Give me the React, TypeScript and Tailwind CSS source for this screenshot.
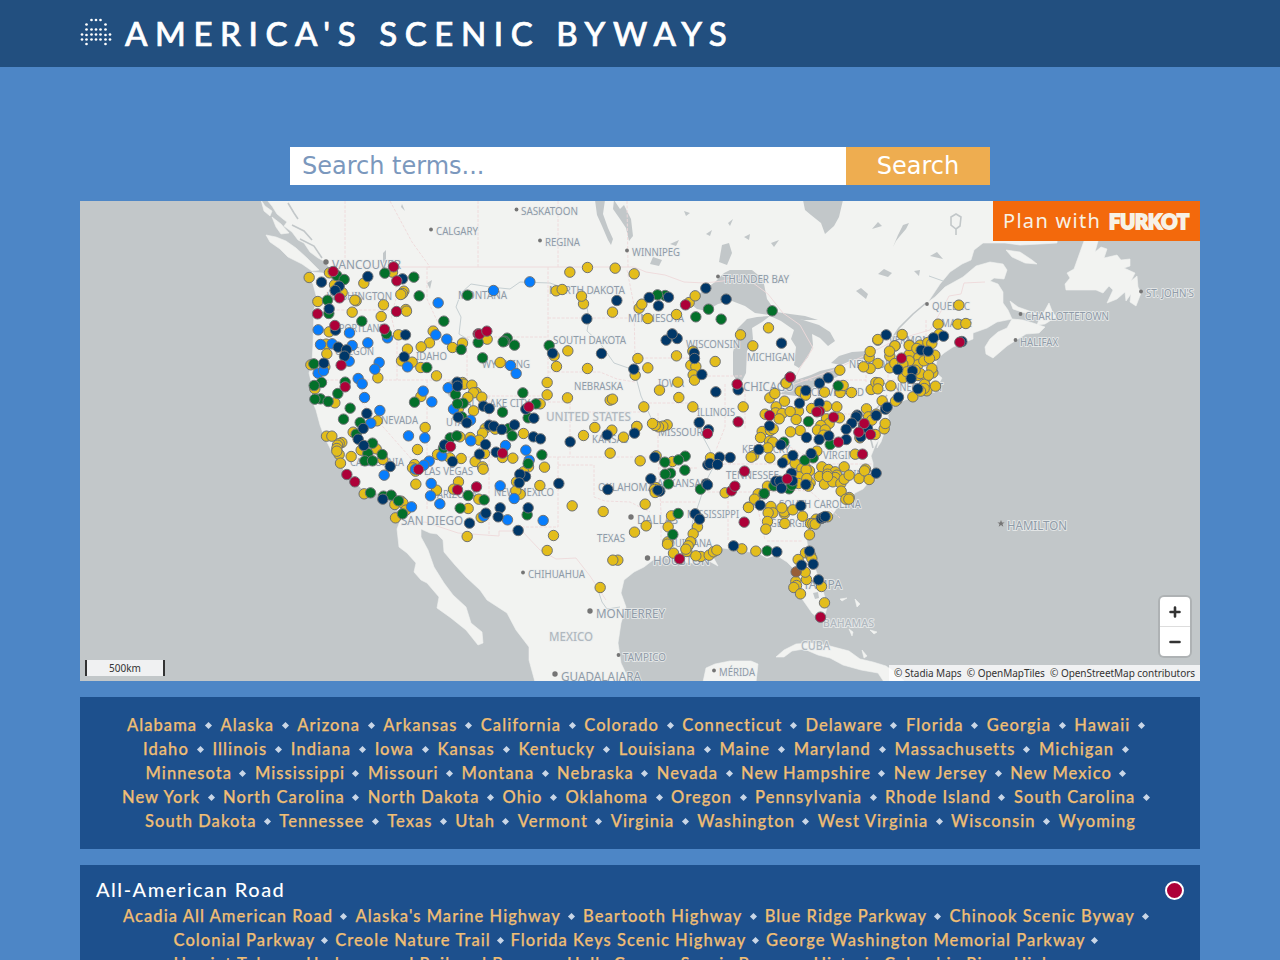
import React from 'react';

type Kind = 'yellow' | 'brown' | 'blue' | 'green' | 'navy' | 'red';

interface Region {
  origin: [number, number];
  markers: Partial<Record<Kind, string>>;
}

const KIND_ORDER: Kind[] = ['yellow', 'brown', 'blue', 'green', 'navy', 'red'];

const KIND_COLOR: Record<Kind, string> = {
  yellow: '#e3bd1b',
  brown: '#985f37',
  blue: '#077dfd',
  green: '#03702a',
  navy: '#003768',
  red: '#ad0038',
};

// Marker offsets are stored in thirds of a pixel from each region's origin.
const REGIONS: Region[] = [
  {
    origin: [290, 240],
    markers: {
      yellow:
        '57,112 118,98 221,129 307,96 133,134 156,157 83,184 198,182 194,180 186,216 280,194 273,229 341,153 337,160 332,163 347,208 349,213 325,284 117,275 108,312 110,341 62,374 104,380 263,413 429,273 418,308 393,320 352,327 334,362 366,366 392,382 439,407 487,322 517,309 591,297',
      blue: '444,188 84,269 178,278 292,293 91,313 126,311 186,316 233,308 177,363 267,367 254,387 84,399 100,392 437,284 470,297 352,380',
      green:
        '140,106 162,118 284,99 371,111 387,167 112,180 116,220 215,243 461,243 532,165 289,281 71,371 410,382 513,328 564,307 577,353',
      navy: '94,126 233,109 337,116 147,138 135,151 117,206 136,270 346,284 144,321 169,329 163,348 101,369 342,350',
      red: '129,94 310,80 320,122 148,173 82,221 134,256 319,214 283,267 153,375 564,281 568,282 590,273',
    },
  },
  {
    origin: [290, 370],
    markers: {
      yellow:
        '74,56 134,98 261,152 109,198 125,198 155,217 147,220 142,225 140,235 147,253 140,243 151,279 183,259 189,186 258,236 213,240 278,268 222,371 333,393 314,403 338,398 347,420 316,443 405,172 382,238 392,79 377,342 373,283 367,293 376,303 439,360 442,253 505,335 490,357 513,265 479,263 555,274 577,290 579,297 540,202 509,200 534,415 566,387 531,499 573,442 517,37 521,42 545,45 558,67 550,68 533,82 575,81 550,122 585,175 577,189 567,210 583,250 505,115',
      blue: '204,25 216,41 223,82 269,121 242,159 355,197 404,203 399,63 425,95 282,315 364,410 423,340 421,377 449,401 417,273 401,285 376,297 474,53 490,117 541,150 542,212 455,257 581,438',
      green:
        '165,36 94,37 72,46 143,70 91,86 74,87 114,94 180,114 160,147 210,157 198,192 247,219 233,250 276,253 224,272 247,272 241,368 280,378 303,375 325,392 337,431 373,96 496,73 519,99 502,101 515,140 480,203 500,197 460,233 534,376 582,389 510,414',
      navy: '230,130 219,175 204,207 221,226 300,289 278,387 463,224 487,274 538,459 501,36 502,48 580,108 597,115 504,141 530,158 586,223 568,252 597,165 587,429',
      red: '165,50 170,313 194,335 481,229 385,298 502,359 559,350',
    },
  },
  {
    origin: [430, 250],
    markers: {
      yellow: '419,66 472,52 555,54 612,71 378,122 396,118 460,161 454,138 547,186 413,302 372,317 379,349 472,355 210,337',
      blue: '190,121 299,95 241,346 258,370',
      green: '357,286 231,264 223,273 219,275 253,285',
      navy: '560,151 470,206 514,310 367,309',
    },
  },
  {
    origin: [430, 370],
    markers: {
      yellow:
        '351,37 351,74 412,83 540,90 547,87 330,101 494,172 545,180 460,196 580,201 620,169 540,249 280,190 248,264 217,262 343,291 295,290 280,305 259,335 329,346 270,372 257,362 426,407 519,424 370,496 351,541 563,570 548,570 195,177 510,652',
      blue: '226,226 287,240 297,270 210,347 252,385 232,449 339,451',
      green: '278,68 217,126 317,101 294,143 236,175 246,197 335,254 294,280 291,434',
      navy: '287,117 311,144 191,168 215,178 253,164 310,200 331,206 420,215 531,194 613,189 198,246 286,319 269,312 267,338 386,340 533,358 210,413 204,440 264,481 294,413',
      red: '296,110 217,249',
    },
  },
  {
    origin: [620, 260],
    markers: {
      yellow:
        '207,127 225,107 57,144 65,132 83,175 169,163 361,224 445,203 398,257 218,273 169,287 285,304 53,295 83,323 45,345 212,315 227,319 219,344 223,360 173,366 118,390 176,412 497,368',
      green: '135,106 112,104 265,147 227,170 303,177 456,152',
      navy: '87,112 145,111 115,137 257,84 318,117 171,235 138,240 156,221 484,249 222,279 223,295 245,343 41,327 287,395 354,389',
      red: '196,134 510,351 351,372',
    },
  },
  {
    origin: [620, 390],
    markers: {
      yellow:
        '71,50 218,50 369,50 50,109 141,104 128,108 115,110 105,106 97,100 60,212 108,197 157,214 107,292 103,298 105,307 75,342 78,407 43,426 154,377 144,410 143,455 142,462 160,489 232,410 219,431 211,455 204,467 200,484 197,477 242,499 227,497 267,495 280,485 290,480 271,203 315,308 365,476 407,483 385,351',
      green: '195,198 175,209 134,216 194,240 151,249 135,252 145,281 241,297 174,370 158,433 432,311 441,482',
      navy: '237,97 265,119 104,201 298,201 330,202 263,224 269,220 292,223 92,266 119,303 113,300 259,281 262,284 225,371 238,387 340,467 470,485',
      red: '354,95 262,130 373,243 334,302 344,288 372,396 178,506',
    },
  },
  {
    origin: [740, 340],
    markers: {
      yellow:
        '299,90 413,70 413,0 390,85 387,51 370,80 180,153 196,165 253,156 300,157 309,136 334,157 138,129 89,173 104,160 133,183 108,200 75,222 106,218 126,220 117,236 175,213 150,214 168,238 214,205 259,198 290,200 298,233 259,236 267,250 242,256 232,270 255,269 250,285 180,271 151,275 66,274 91,271 99,266 61,292 88,303 98,306 83,323 41,346 33,351 89,353 138,358 165,370 230,333 379,206 385,230 408,222 345,342 359,293 405,283 395,240 426,182 437,205 432,266 435,250 393,148 407,127 416,128 413,146 452,137 470,180 466,183 518,170 449,48 465,17 449,83 464,70 508,15 507,43 489,113 536,52 533,74 533,106 560,110 578,98 575,85 584,45 551,62 540,100 553,132 560,152 552,145 541,153 586,138 565,105 507,62 525,90 488,72 500,95 568,55 195,380 185,385 208,392 177,410 198,389 210,428 175,430 200,415 205,438 245,380 265,388 312,380 238,409 253,432 285,395 290,405 285,412 262,402 278,425 262,409 302,430 312,417 327,405 357,415 376,387 373,392 387,418 303,453 327,472 317,477 326,477 82,438 54,461 43,477',
      green: '294,137 205,244 270,313 131,306 219,353 194,360 72,460 101,437 147,446 155,435',
      navy: '197,151 238,129 264,113 178,189 237,189 351,225 348,230 335,249 318,267 318,298 266,287 237,298 199,292 88,257 122,314 56,328 213,340 158,346 127,368 154,399 107,423 119,423 157,422 124,444 197,433 408,226 408,399 436,207 441,201 475,171 533,146 473,88 517,92 513,115 543,30 564,33 370,255 382,265 362,290',
      red: '150,111 88,226 238,213 230,215 280,231 295,306 372,250 356,276 391,283 367,342 141,416 484,54',
    },
  },
  {
    origin: [740, 460],
    markers: {
      yellow:
        '25,142 92,139 98,158 84,158 133,161 132,155 125,143 158,149 82,184 77,207 134,190 187,168 228,177 211,190 218,190 225,192 262,170 208,224 196,278 211,285 215,295 174,298 199,358 195,336 167,364 169,376 161,382 181,401 244,379 253,428',
      brown: '168,335',
      navy: '60,135 182,137 243,175 249,172 255,169 208,273 219,312 184,315 235,359',
      red: '241,471',
    },
  },
  {
    origin: [840, 200],
    markers: {
      yellow:
        '356,315 294,372 353,372 377,370 186,403 113,418 164,437 90,454 148,453 207,436 240,435 263,427 275,430 297,402 230,445',
      navy: '138,404 310,408 280,413 365,424',
      red: '359,426',
    },
  },
];

const DOTS = KIND_ORDER.flatMap((kind) =>
  REGIONS.flatMap(({ origin, markers }) =>
    (markers[kind] ?? '')
      .split(' ')
      .filter(Boolean)
      .map((pair) => {
        const [x, y] = pair.split(',').map(Number);
        return { kind, x: origin[0] + (x + 0.5) / 3, y: origin[1] + (y + 0.5) / 3 };
      }),
  ),
);

const LAND = [
  // North American mainland
  'M267 200L272 206L277 214L283 219L287 222L284 226L292 232L298 240L304 243L310 252L318 258L324 261L329 267L328 276L323 273L312 272L309 277L313 284L317 299L314 310L313 345L312 362L309 373L312 385L311 398L316 410L320 425L324 436L332 452L341 461L343 469L352 478L361 488L376 493L388 495L393 505L399 512L400 521L397 529L399 547L407 553L416 563L414 572L421 580L427 583L439 597L437 608L451 618L466 630L478 645L483 643L482 632L471 623L466 607L453 595L444 583L434 567L428 550L421 537L421 529L430 533L437 534L443 540L444 552L455 565L466 577L480 590L487 600L507 613L516 630L529 647L529 660L535 682H630L621 663L618 643L621 623L626 607L621 593L624 580L634 572L644 567L653 560L664 557L672 560L681 562L692 563L701 562L709 561L718 566L713 557L722 548L737 550L750 552L758 553L767 558L776 555L787 562L796 571L792 583L798 593L805 603L812 613L818 618L825 615L827 607L823 590L815 568L808 549L806 535L814 527L822 520L832 515L837 508L847 505L849 500L855 493L863 489L873 477L873 463L871 456L875 446L879 439L877 448L881 442L885 430L889 423L888 415L895 404L905 400L919 396L935 392L928 388L938 385L942 378L935 372L937 359L944 353L953 347L973 339V333L987 328L997 322L1012 319L1008 310L1003 303V292L998 284L990 281L994 278L1004 279L1007 270L1003 264L990 262L976 266L963 277L945 287L935 297L928 302L940 284L950 272L962 264L971 260L974 250L983 243L1005 243L1020 245L1040 244L1057 243L1060 200Z',
  // Vancouver Island and the northern islands
  'M266 235L276 237L286 241L296 248L307 258L319 270L312 271L302 264L288 257L280 249L270 242Z',
  'M261 200L265 206L272 211L270 216L264 211Z',
  'M272 217L281 224L289 233L281 234L276 227Z',
  // Nova Scotia and the Gulf of St. Lawrence
  'M985 347L990 339L998 332L1007 328L1012 319L1023 320L1033 323L1045 327L1039 333L1026 334L1007 346L993 358L986 354Z',
  'M1010 301L1018 307L1032 312L1040 315L1025 313L1013 309Z',
  'M1044 312L1049 303L1052 311L1056 317L1045 324L1037 325L1040 317Z',
  'M1006 250L1020 252L1032 260L1037 264L1025 263L1012 257Z',
  // Newfoundland
  'M1084 241L1098 241L1095 252L1101 247L1107 249L1104 258L1117 255L1121 260L1130 259L1130 266L1124 268L1135 273L1131 281L1137 276L1138 287L1141 293L1136 306L1130 302L1131 294L1126 301L1125 292L1117 299L1107 303L1113 290L1109 286L1103 293L1096 290L1066 290L1065 284L1070 278L1067 273L1074 269Z',
  // Yucatán, Cuba and the Bahamas
  'M703 682L706 668L715 664L730 661L751 661L758 664L756 682Z',
  'M776 657L784 650L796 644L811 643L830 646L849 651L860 659L873 662L886 666L896 673L905 682H884L878 673L861 670L843 665L830 658L818 655L804 649L792 651L784 657Z',
  'M840 599L847 598L842 601ZM855 599L860 604L857 607ZM849 629L853 632L852 636ZM862 650L867 656L864 658ZM870 630L877 632L874 634Z',
];

const WATER = [
  // Great Lakes
  'M688 302L700 293L715 282L724 273L730 270L752 270L763 279L767 299L776 312L790 314L805 316L818 320L804 320L788 318L770 315L755 313L745 306L732 301L718 304L706 311L697 309Z',
  'M737 329L747 319L757 317L770 316L762 322L752 328L753 339L747 351L746 373L740 385L733 375L733 352L736 340Z',
  'M770 316L784 315L800 319L819 325L830 332L835 341L828 346L820 338L812 334L813 345L808 357L799 368L794 365L796 347L791 339L794 330L781 321Z',
  'M781 394L786 383L799 379L811 375L820 371L837 367L843 369L837 377L823 382L812 389L796 396Z',
  'M831 363L839 356L852 352L867 351L875 352L867 359L850 361L841 365Z',
  // Northern lakes
  'M595 200L605 200L603 214L608 228L613 239L611 245L608 240L602 226L597 215Z',
  'M614 200L620 209L624 205L631 219L633 236L629 241L626 228L620 219L613 209Z',
  'M803 200H843L839 217L834 226L825 234L821 223L811 215L805 210Z',
  'M722 245L729 243L732 253L727 265L719 262Z',
  'M653 257L662 260L659 266L650 264Z',
  'M728 223L733 219L730 226ZM684 211L690 213L686 216ZM706 234L712 230L710 236ZM670 244L679 240L676 246ZM744 237L750 234L749 240ZM771 243L779 240L774 247Z',
  'M893 247L898 235L903 225L909 223L906 229L900 236L896 241Z',
  'M878 274L884 269L892 273L888 277ZM914 271L920 270L919 276ZM930 256L937 252L943 259ZM856 291L861 288L868 294L866 299ZM872 229L878 222L882 226Z',
  'M446 383L452 380L459 389L455 402L448 395Z',
  'M427 283L432 280L430 289ZM383 253L386 250V260L383 264ZM402 204L405 211L401 207ZM813 593L818 592L819 598L815 599Z',
];

const FJORDS = [
  'M288 203L294 213L298 219M292 225L304 231L312 240M300 239L314 246L322 258M323 263L331 273L333 286L329 292M333 292L329 305',
  'M891 340L899 328L913 314L926 303M874 439L867 424L873 448M887 395L878 407L870 415',
  'M951 217L956 214L961 217L960 226L956 229L951 225ZM956 229V235',
];

const RIVERS = [
  'M456 307L461 293L471 284L490 287L510 289L520 282L550 283L564 288',
  'M456 307L461 317L459 334L469 340M587 307L589 320L587 331L600 343L614 363L634 370L641 396L653 422',
  'M703 437L710 450L714 466L706 481L699 503L693 520L689 540',
  'M598 590L602 602L607 609L620 607M929 276L943 281M470 460L480 447',
];

const BORDERS = [
  'M330 267H634L646 272L665 275L684 282L705 283L723 281M723 281L745 277L768 294L783 313L800 325L813 348L800 368M800 368L792 385L836 369L868 354L890 343L913 335L930 330L944 306L949 296L961 294L964 283L985 282',
  'M401 525L425 522L458 533L499 536V531H522L540 550L556 559L576 558L590 576L606 600',
  'M345 267V201M478 267V201M558 267V201M628 267L627 201M390 201L412 242L430 267L427 267',
  'M313 299L330 310H396M396 267V299L391 315L397 341V380M317 380H467M467 337V380M427 267V299L439 325L428 326L440 342M467 337H548M548 267V402M548 318H634M548 372H600L617 379L635 382',
  'M427 380V510M362 380V403L423 472M465 396H548M489 396V536M427 457H558M558 465H594V497L605 501L630 502L650 512M570 402V457M548 402H570M570 412H640M558 457V527H521M558 457H658',
  'M627 270L634 305L635 358H700M640 403H690M658 413V457L661 512V540M661 502H697M658 468H697M710 464H810M703 492H780M728 492V540M754 492L765 540M767 541H803M725 384V427L716 450M745 385V430M690 376H742M783 385V407M783 407L770 430L750 448M796 380H866M866 348V382M874 380H906M888 334V390M904 334V386M926 320V368',
  'M810 464H873M780 490L810 491L840 518M790 447L812 459M821 414H876M821 382V414L800 438',
];

interface MapLabel {
  text: string;
  x: number;
  y: number;
  w: number;
  size?: number;
  bold?: boolean;
  dot?: [number, number];
}

const LABELS: MapLabel[] = [
  { text: 'SASKATOON', x: 521, y: 215, w: 57, dot: [516.5, 209.5] },
  { text: 'CALGARY', x: 436, y: 235, w: 42, dot: [431, 229.5] },
  { text: 'REGINA', x: 545, y: 246, w: 35, dot: [540, 240.5] },
  { text: 'WINNIPEG', x: 632, y: 256, w: 48, dot: [627, 250.5] },
  { text: 'VANCOUVER', x: 332, y: 269, w: 69, size: 12.5, dot: [326, 262] },
  { text: 'THUNDER BAY', x: 723, y: 283, w: 66, dot: [718, 276.5] },
  { text: 'WASHINGTON', x: 327, y: 300, w: 65 },
  { text: 'MONTANA', x: 458, y: 299, w: 49 },
  { text: 'NORTH DAKOTA', x: 549, y: 294, w: 76 },
  { text: 'MINNESOTA', x: 628, y: 322, w: 56 },
  { text: 'SOUTH DAKOTA', x: 553, y: 344, w: 73 },
  { text: 'PORTLAND', x: 339, y: 332, w: 47 },
  { text: 'OREGON', x: 335, y: 355, w: 39 },
  { text: 'IDAHO', x: 416, y: 360, w: 31 },
  { text: 'WYOMING', x: 482, y: 368, w: 48 },
  { text: 'WISCONSIN', x: 686, y: 348, w: 54 },
  { text: 'MICHIGAN', x: 747, y: 361, w: 48 },
  { text: 'NEBRASKA', x: 574, y: 390, w: 49 },
  { text: 'IOWA', x: 658, y: 387, w: 26 },
  { text: 'CHICAGO', x: 743, y: 391, w: 51, size: 12.5 },
  { text: 'CLEVELAND', x: 811, y: 396, w: 53 },
  { text: 'NEW YORK', x: 849, y: 368, w: 48 },
  { text: 'VERMONT', x: 889, y: 344, w: 46 },
  { text: 'MAINE', x: 941, y: 327, w: 31 },
  { text: 'CONNECTICUT', x: 880, y: 391, w: 63 },
  { text: 'QUEBEC', x: 932, y: 310, w: 38, dot: [927, 304] },
  { text: 'CHARLOTTETOWN', x: 1025, y: 320, w: 84, dot: [1020.5, 314] },
  { text: 'HALIFAX', x: 1020, y: 346, w: 38, dot: [1015.5, 340] },
  { text: "ST. JOHN'S", x: 1146, y: 297, w: 48, dot: [1141, 291.5] },
  { text: 'SALT LAKE CITY', x: 460, y: 407, w: 70 },
  { text: 'NEVADA', x: 381, y: 424, w: 37 },
  { text: 'UTAH', x: 446, y: 426, w: 25 },
  { text: 'UNITED STATES', x: 546, y: 421, w: 85, size: 12.5, bold: true },
  { text: 'KANSAS', x: 592, y: 443, w: 36 },
  { text: 'ILLINOIS', x: 697, y: 416, w: 38 },
  { text: 'MISSOURI', x: 658, y: 436, w: 48 },
  { text: 'KENTUCKY', x: 742, y: 453, w: 48 },
  { text: 'VIRGINIA', x: 823, y: 459, w: 41 },
  { text: 'CALIFORNIA', x: 350, y: 466, w: 54 },
  { text: 'LAS VEGAS', x: 424, y: 475, w: 49 },
  { text: 'ARIZONA', x: 437, y: 498, w: 40 },
  { text: 'NEW MEXICO', x: 494, y: 496, w: 60 },
  { text: 'SAN DIEGO', x: 401, y: 525, w: 62, size: 12.5 },
  { text: 'OKLAHOMA', x: 598, y: 491, w: 56 },
  { text: 'ARKANSAS', x: 657, y: 487, w: 49 },
  { text: 'TENNESSEE', x: 726, y: 479, w: 53 },
  { text: 'NORTH CAROLINA', x: 786, y: 478, w: 84 },
  { text: 'SOUTH CAROLINA', x: 779, y: 508, w: 82 },
  { text: 'MISSISSIPPI', x: 687, y: 518, w: 52 },
  { text: 'GEORGIA', x: 770, y: 527, w: 41 },
  { text: 'DALLAS', x: 637, y: 524, w: 41, size: 12.5, dot: [631, 517] },
  { text: 'TEXAS', x: 597, y: 542, w: 28 },
  { text: 'LOUISIANA', x: 663, y: 547, w: 49 },
  { text: 'HOUSTON', x: 653, y: 565, w: 57, size: 12.5, dot: [647.5, 558] },
  { text: 'CHIHUAHUA', x: 528, y: 578, w: 57, dot: [523, 572.5] },
  { text: 'MONTERREY', x: 596, y: 618, w: 69, size: 12.5, dot: [590, 611] },
  { text: 'MEXICO', x: 549, y: 641, w: 44, size: 12, bold: true },
  { text: 'TAMPICO', x: 623, y: 661, w: 43, dot: [618.5, 655] },
  { text: 'GUADALAJARA', x: 561, y: 681, w: 80, size: 12.5, dot: [555, 674] },
  { text: 'MÉRIDA', x: 719, y: 676, w: 36, dot: [714, 670.5] },
  { text: 'TAMPA', x: 803, y: 589, w: 39, size: 12.5 },
  { text: 'BAHAMAS', x: 823, y: 627, w: 51, bold: true },
  { text: 'CUBA', x: 801, y: 650, w: 29, size: 12, bold: true },
  { text: 'HAMILTON', x: 1007, y: 530, w: 60, size: 12 },
];

function BywaysMap() {
  return (
    <svg viewBox="80 201 1120 480" className="block h-[480px] w-[1120px] bg-[#c2c7c9]">
      <g fill="#f2f3f1" stroke="#f2f3f1" strokeWidth="0.6" strokeLinejoin="round">
        {LAND.map((d) => (
          <path key={d} d={d} />
        ))}
      </g>
      <g fill="#c2c7c9">
        {WATER.map((d) => (
          <path key={d} d={d} />
        ))}
      </g>
      <g fill="none" stroke="#c2c7c9" strokeWidth="1.6">
        {FJORDS.map((d) => (
          <path key={d} d={d} />
        ))}
      </g>
      <g fill="none" stroke="#c6cfd2" strokeWidth="1">
        {RIVERS.map((d) => (
          <path key={d} d={d} />
        ))}
      </g>
      <g fill="none" stroke="#eed9da" strokeWidth="0.9">
        {BORDERS.map((d, i) => (
          <path key={d} d={d} strokeDasharray={i < 2 ? undefined : '3 1.5'} />
        ))}
      </g>
      <g className="font-['Noto_Sans',sans-serif]">
        {LABELS.map((l) => (
          <React.Fragment key={l.text}>
            {l.dot && <circle cx={l.dot[0]} cy={l.dot[1]} r={l.size ? 2.7 : 1.9} fill="#757575" />}
            <text
              x={l.x}
              y={l.y + 0.4}
              fontSize={l.size ?? 10.5}
              fontWeight={l.bold ? 500 : 400}
              textLength={l.w}
              lengthAdjust="spacingAndGlyphs"
              fill={l.bold ? '#b0b8bf' : '#8f9ba8'}
              stroke="#eceeee"
              strokeOpacity="0.8"
              strokeWidth="2"
              strokeLinejoin="round"
              paintOrder="stroke"
            >
              {l.text}
            </text>
          </React.Fragment>
        ))}
        <path d="M1001 520l1 2.5h2.6l-2.1 1.6.8 2.6-2.3-1.6-2.3 1.6.8-2.6-2.1-1.6h2.6z" fill="#757575" />
      </g>
      <g stroke="#6f7275" strokeWidth="1">
        {DOTS.map((d, i) => (
          <circle key={i} cx={d.x} cy={d.y} r="5.2" fill={KIND_COLOR[d.kind]} />
        ))}
      </g>
    </svg>
  );
}

interface Row {
  width: string;
  names: string[];
  last?: boolean;
}

const STATES: Row[] = [
  { width: 'w-[1018px]', names: ['Alabama', 'Alaska', 'Arizona', 'Arkansas', 'California', 'Colorado', 'Connecticut', 'Delaware', 'Florida', 'Georgia', 'Hawaii'] },
  { width: 'w-[986px]', names: ['Idaho', 'Illinois', 'Indiana', 'Iowa', 'Kansas', 'Kentucky', 'Louisiana', 'Maine', 'Maryland', 'Massachusetts', 'Michigan'] },
  { width: 'w-[981px]', names: ['Minnesota', 'Mississippi', 'Missouri', 'Montana', 'Nebraska', 'Nevada', 'New Hampshire', 'New Jersey', 'New Mexico'] },
  { width: 'w-[1028px]', names: ['New York', 'North Carolina', 'North Dakota', 'Ohio', 'Oklahoma', 'Oregon', 'Pennsylvania', 'Rhode Island', 'South Carolina'] },
  { width: 'w-[990px]', names: ['South Dakota', 'Tennessee', 'Texas', 'Utah', 'Vermont', 'Virginia', 'Washington', 'West Virginia', 'Wisconsin', 'Wyoming'], last: true },
];

const ROADS: Row[] = [
  { width: 'w-[1026px]', names: ['Acadia All American Road', "Alaska's Marine Highway", 'Beartooth Highway', 'Blue Ridge Parkway', 'Chinook Scenic Byway'] },
  { width: 'w-[925px]', names: ['Colonial Parkway', 'Creole Nature Trail', 'Florida Keys Scenic Highway', 'George Washington Memorial Parkway'] },
  { width: 'w-[925px]', names: ['Harriet Tubman Underground Railroad Byway', 'Hells Canyon Scenic Byway', 'Historic Columbia River Highway'] },
];

function LinkRows({ rows }: { rows: Row[] }) {
  return (
    <div className="flex flex-col items-center text-[16.5px] font-medium tracking-[1.05px] text-[#efbe74] [-webkit-text-stroke:0.25px_#efbe74]">
      {rows.map((row) => (
        <div key={row.names[0]} className={row.last ? '' : 'pr-2'}>
          <div className={`flex h-6 items-center justify-between whitespace-nowrap ${row.width}`}>
            {row.names.map((name, i) => (
              <React.Fragment key={name}>
                <a className="-mr-px">{name}</a>
                {!(row.last && i === row.names.length - 1) && (
                  <span className="mx-px mt-px size-[5px] shrink-0 rotate-45 bg-[#c9d6e7]" />
                )}
              </React.Fragment>
            ))}
          </div>
        </div>
      ))}
    </div>
  );
}

const LOGO_DOTS: [number, number[]][] = [
  [2, [11.5, 16, 20.5]],
  [6.5, [6.5, 25.5]],
  [11.5, [6.5, 11.5, 16, 20.5, 25.5]],
  [16.5, [2, 11.5, 16, 20.5, 30]],
  [17, [6.5, 25.5]],
  [21.5, [2, 6.5, 11.5, 16, 20.5, 25.5, 30]],
  [26, [6.5, 25.5]],
];

export default function App() {
  return (
    <div className="h-[960px] overflow-hidden bg-[#4d86c6] font-['Lato','Open_Sans',sans-serif]">
      <header className="flex h-[67px] items-center bg-[#224f7f] px-20">
        <svg viewBox="0 0 32 28" className="mb-1 h-7 w-8" fill="#fff">
          {LOGO_DOTS.map(([y, xs]) => xs.map((x) => <circle key={`${x}-${y}`} cx={x} cy={y} r="1.35" />))}
        </svg>
        <h1 className="ml-[13px] text-[33px] font-medium tracking-[7.6px] whitespace-nowrap text-white [-webkit-text-stroke:0.7px_white]">
          AMERICA'S SCENIC BYWAYS
        </h1>
      </header>

      <main className="mx-auto flex w-[1120px] flex-col gap-4 pt-20">
        <form className="mx-auto flex h-[38px] w-[700px] font-['DejaVu_Sans',sans-serif] text-2xl">
          <input
            className="w-[556px] bg-white px-3 outline-none placeholder:text-[#7b98bd]"
            placeholder="Search terms..."
          />
          <button type="button" className="w-36 bg-[#eead50] text-white">
            Search
          </button>
        </form>

        <section className="relative h-[480px]">
          <BywaysMap />
          <a className="absolute top-0 right-0 flex h-10 w-[207px] items-center justify-between bg-[#f3690c] px-[10px] font-['Noto_Sans',sans-serif] text-xl whitespace-nowrap text-[#f7f2e6]">
            <span className="tracking-[1.3px]">Plan with</span>
            <svg viewBox="0 0 82 30" className="mt-0.5 h-[30px] w-[82px]">
              <text
                x="1"
                y="22"
                className="font-['Lato',sans-serif]"
                fontSize="20"
                fontWeight="900"
                textLength="80"
                lengthAdjust="spacing"
                fill="#f7f2e6"
                stroke="#f7f2e6"
                strokeWidth="1.8"
              >
                FURKOT
              </text>
            </svg>
          </a>
          <div className="absolute right-[10px] bottom-[25px] flex h-[59px] w-[30px] flex-col rounded bg-white shadow-[0_0_0_2px_rgba(0,0,0,0.1)]">
            <button type="button" className="flex h-[30px] items-center justify-center border-b border-[#ddd] pr-px">
              <svg viewBox="0 0 12 12" className="size-3" stroke="#333" strokeWidth="2.6" strokeLinecap="round">
                <path d="M6 1.5v9M1.5 6h9" />
              </svg>
            </button>
            <button type="button" className="flex h-[29px] items-center justify-center pr-px">
              <svg viewBox="0 0 12 12" className="size-3" stroke="#333" strokeWidth="2.6" strokeLinecap="round">
                <path d="M1.5 6h9" />
              </svg>
            </button>
          </div>
          <div className="absolute bottom-[5px] left-[5px] h-4 w-20 border-x-2 border-[#333] bg-white/75 text-center font-['Noto_Sans',sans-serif] text-[10px] leading-4 text-[#333]">
            500km
          </div>
          <div className="absolute right-0 bottom-0 flex h-4 w-[311px] items-center justify-between bg-white/75 px-[5px] font-['Noto_Sans',sans-serif] text-[10px] tracking-[-0.05px] whitespace-nowrap text-[#333]">
            <span>© Stadia Maps</span>
            <span>© OpenMapTiles</span>
            <span>© OpenStreetMap contributors</span>
          </div>
        </section>

        <section className="h-[152px] bg-[#1d508d] pt-4">
          <LinkRows rows={STATES} />
        </section>

        <section className="h-[240px] bg-[#1d508d] px-4 pt-[12px]">
          <div className="flex h-[27px] items-center justify-between">
            <h2 className="pb-1 text-xl font-medium tracking-[1.5px] text-white">All-American Road</h2>
            <span className="size-[19px] rounded-full border-2 border-white bg-[#ad0038]" />
          </div>
          <LinkRows rows={ROADS} />
        </section>
      </main>
    </div>
  );
}
